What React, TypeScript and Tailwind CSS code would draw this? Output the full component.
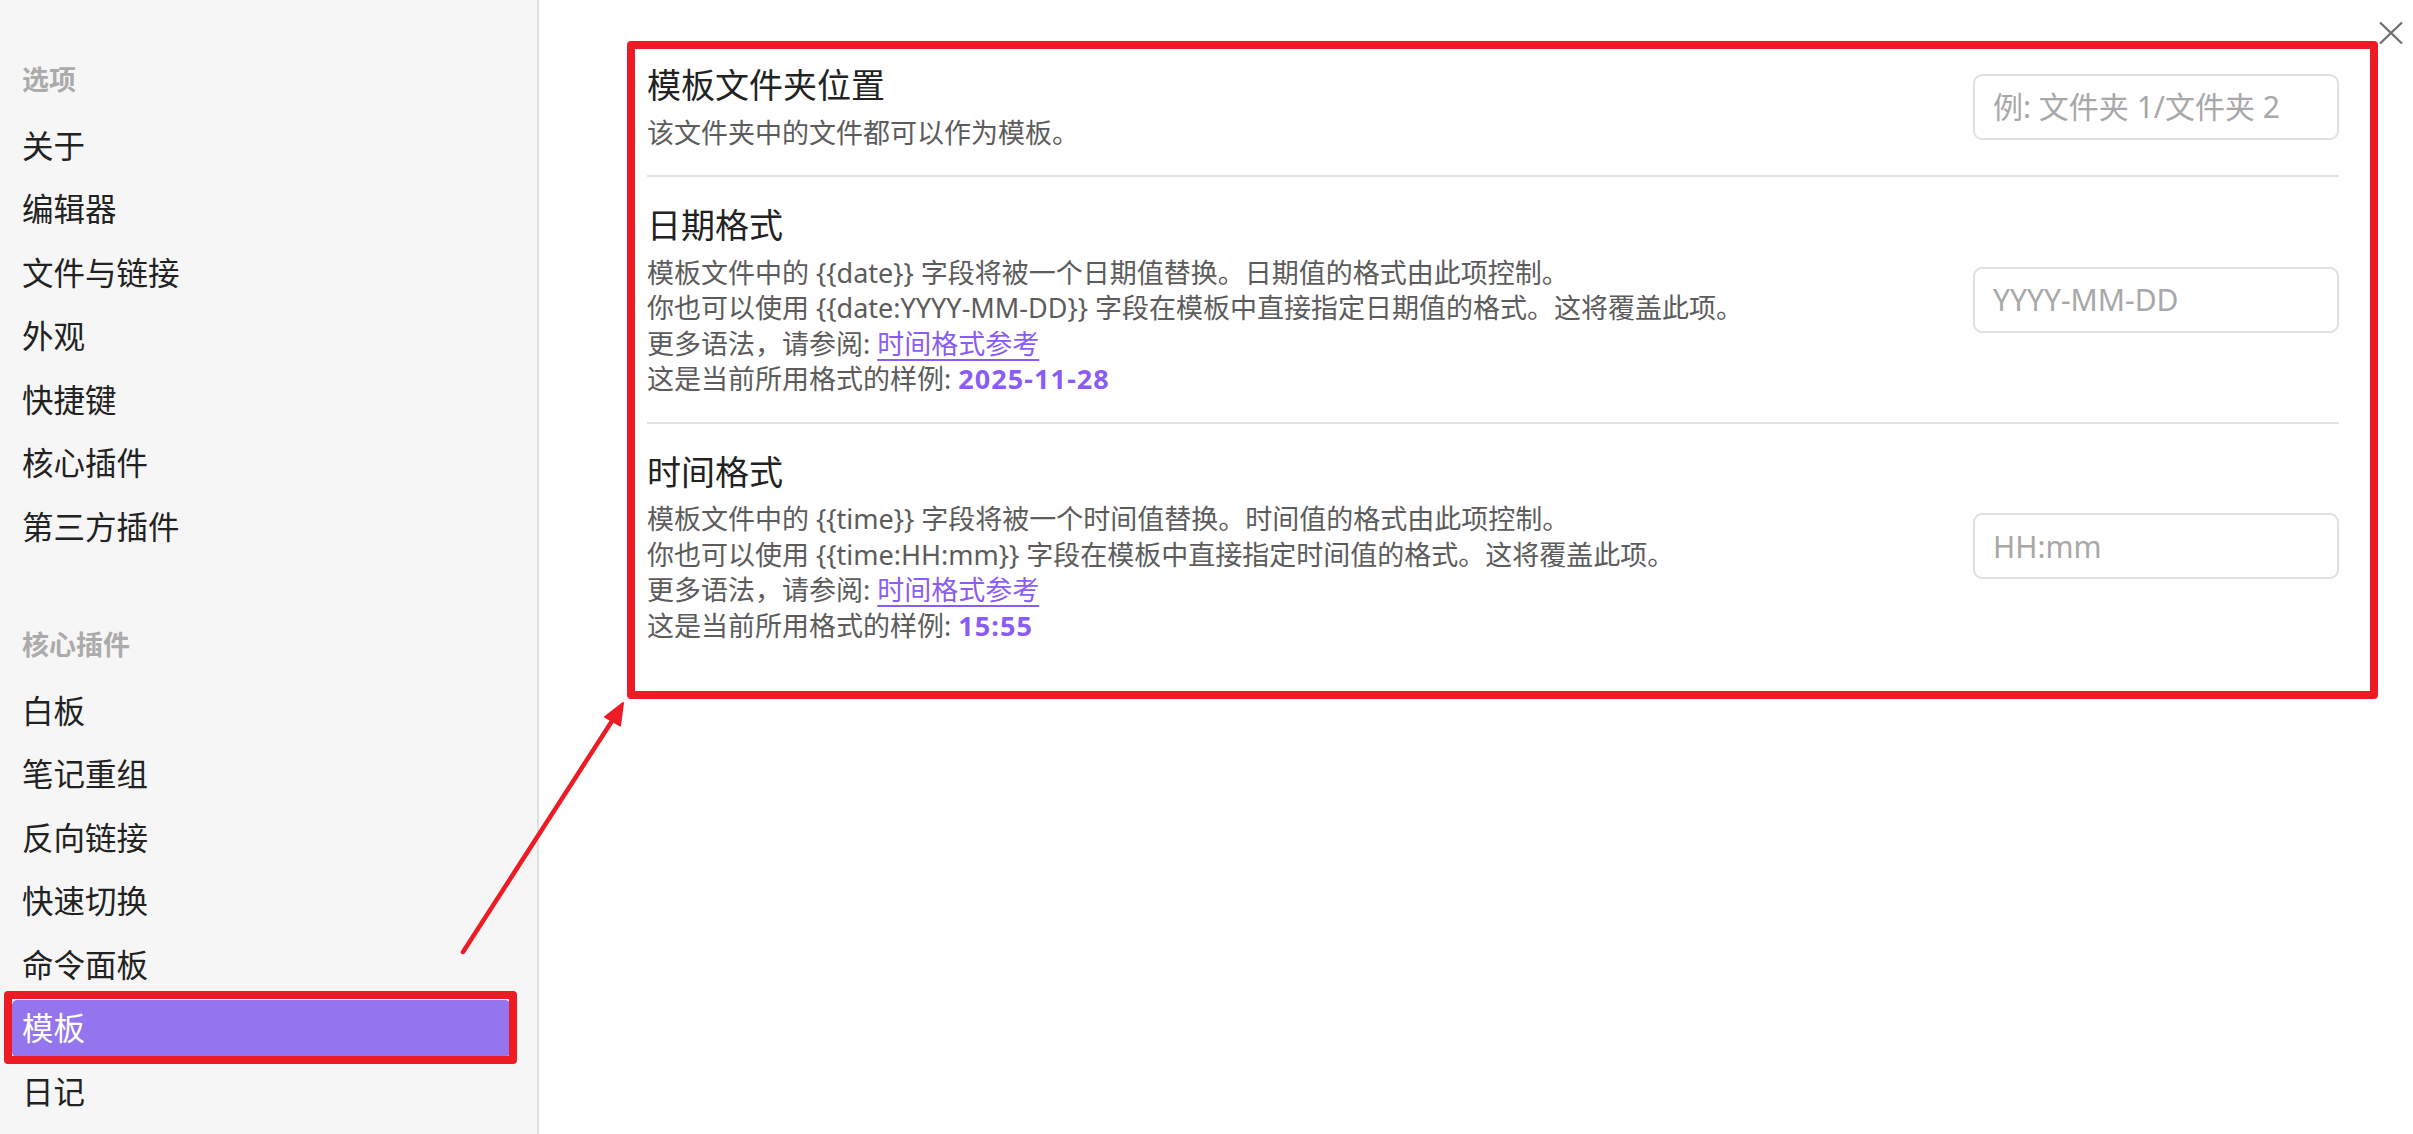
import type { ReactNode } from 'react'

const options = ['关于', '编辑器', '文件与链接', '外观', '快捷键', '核心插件', '第三方插件']
const corePlugins = ['白板', '笔记重组', '反向链接', '快速切换', '命令面板', '模板', '日记']

function NavSection({ title, items, active }: { title: string; items: string[]; active?: string }) {
  return (
    <div>
      <div className="h-[40px] px-[22px] text-[27px] font-bold leading-[40px] text-[#ababab]">{title}</div>
      <div className="mt-[17px] flex flex-col gap-[6.5px]">
        {items.map((item) => (
          <div
            key={item}
            className={
              item === active
                ? 'ml-[12px] mr-[27px] flex h-[57px] items-center rounded-[5px] bg-[#9575ee] px-[10px] text-[31.5px] text-white'
                : 'ml-[12px] mr-[27px] flex h-[57px] items-center px-[10px] text-[31.5px] text-[#222222]'
            }
          >
            {item}
          </div>
        ))}
      </div>
    </div>
  )
}

function SettingItem({
  name,
  placeholder,
  first,
  children,
}: {
  name: string
  placeholder: string
  first?: boolean
  children: ReactNode
}) {
  return (
    <div
      className={`flex items-center justify-between gap-10 pb-[25px] pt-[26px] ${first ? '' : 'border-t-2 border-[#e3e3e3]'}`}
    >
      <div>
        <div className="text-[34px] leading-[44px] text-[#222222]">{name}</div>
        <div className="mt-[7.5px] text-[27px] leading-[35.5px] text-[#5c5c5c]">{children}</div>
      </div>
      <input
        placeholder={placeholder}
        className="h-[66px] w-[366px] shrink-0 rounded-[9px] border-2 border-[#e0e0e0] bg-white px-[18px] text-[30px] text-[#222222] outline-none placeholder:text-[#a8a8a8]"
      />
    </div>
  )
}

function Link({ children }: { children: ReactNode }) {
  return <span className="text-[#8a5cf5] underline decoration-[2px] underline-offset-[5px]">{children}</span>
}

// sample value shown under each format setting
function Sample({ children }: { children: ReactNode }) {
  return <span className="font-bold tracking-[0.04em] text-[#8a5cf5]">{children}</span>
}

export default function App() {
  return (
    <div className="relative flex h-[1134px] w-[2413px] overflow-hidden bg-white font-['Noto_Sans','Noto_Sans_CJK_SC',sans-serif]">
      <aside className="w-[539px] shrink-0 border-r-2 border-[#dfdfdf] bg-[#f6f6f6] pt-[60px]">
        <NavSection title="选项" items={options} />
        <div className="mt-[70px]">
          <NavSection title="核心插件" items={corePlugins} active="模板" />
        </div>
      </aside>

      <main className="relative flex-1 pl-[108px] pr-[74px] pt-[37px]">
        <SettingItem name="模板文件夹位置" placeholder="例: 文件夹 1/文件夹 2" first>
          该文件夹中的文件都可以作为模板。
        </SettingItem>
        <SettingItem name="日期格式" placeholder="YYYY-MM-DD">
          <div>模板文件中的 {'{{date}}'} 字段将被一个日期值替换。日期值的格式由此项控制。</div>
          <div>你也可以使用 {'{{date:YYYY-MM-DD}}'} 字段在模板中直接指定日期值的格式。这将覆盖此项。</div>
          <div>
            更多语法，请参阅: <Link>时间格式参考</Link>
          </div>
          <div>
            这是当前所用格式的样例: <Sample>2025-11-28</Sample>
          </div>
        </SettingItem>
        <SettingItem name="时间格式" placeholder="HH:mm">
          <div>模板文件中的 {'{{time}}'} 字段将被一个时间值替换。时间值的格式由此项控制。</div>
          <div>你也可以使用 {'{{time:HH:mm}}'} 字段在模板中直接指定时间值的格式。这将覆盖此项。</div>
          <div>
            更多语法，请参阅: <Link>时间格式参考</Link>
          </div>
          <div>
            这是当前所用格式的样例: <Sample>15:55</Sample>
          </div>
        </SettingItem>

        {/* close button */}
        <svg className="absolute right-[10px] top-[22px] h-[22px] w-[24px]" viewBox="0 0 24 22" fill="none">
          <path d="M1 0.5L23 21.5M23 0.5L1 21.5" stroke="#6e6e6e" strokeWidth="2.2" />
        </svg>
      </main>

      {/* annotation overlays */}
      <div className="pointer-events-none absolute left-[627px] top-[41px] h-[658px] w-[1751px] rounded-[4px] border-[8px] border-[#ed1c24]" />
      <div className="pointer-events-none absolute left-[4px] top-[991px] h-[73px] w-[513px] rounded-[4px] border-[8px] border-[#ed1c24]" />
      <svg className="pointer-events-none absolute left-0 top-0 h-[1134px] w-[2413px]" viewBox="0 0 2413 1134">
        <line x1="463" y1="952" x2="612" y2="721" stroke="#ed1c24" strokeWidth="4.5" strokeLinecap="round" />
        <polygon points="623,703 605,717 620,725.5" fill="#ed1c24" stroke="#ed1c24" strokeWidth="2" strokeLinejoin="round" />
      </svg>
    </div>
  )
}
